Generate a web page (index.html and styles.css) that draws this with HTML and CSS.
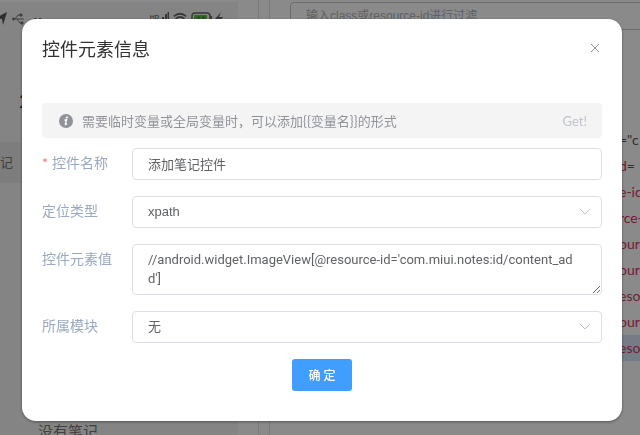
FILE: index.html
```html
<!DOCTYPE html>
<html lang="zh-CN">
<head>
<meta charset="utf-8">
<title>控件元素信息</title>
<link rel="stylesheet" href="styles.css">
</head>
<body>
<div class="page">
  <section class="left-card">
    <div class="phone">
      <div class="status">
        <svg width="8" height="14" viewBox="0 0 8 14"><path d="M7 0L-4 6l6 1 1 6z" fill="#555"/></svg>
        <svg class="usb" width="13" height="12" viewBox="0 0 13 12" fill="none" stroke="#777"><path d="M1 6h11M3 6l3-4h3M5 6l3 4h2"/><circle cx="1.500" cy="6" r="1" fill="#777"/><path d="M8 1h2v2H8zM9 9h2v2H9z" fill="#777"/></svg>
        <span class="dots">••</span>
        <span class="hd">HD</span>
        <svg width="10" height="14" viewBox="0 0 10 14" stroke="#666" stroke-width="2"><path d="M1 14V8M4 14V5M7 14V2M9.500 14V0"/></svg>
        <svg class="wifi" width="14" height="14" viewBox="0 0 16 14" fill="none" stroke="#666" stroke-width="2"><path d="M1 4q7-6 14 0M3 7q5-5 10 0M6 10q2-2 4 0"/></svg>
        <svg width="32" height="14" viewBox="0 0 32 14"><rect x="1" y="1" width="18" height="11" rx="3" fill="none" stroke="#666" stroke-width="1.500"/><rect x="3" y="3" width="13" height="8" fill="#6b4"/><path d="M7 5h2M7 5v5h2V7H7M11 5h2v5h-2M11 7h2" fill="none" stroke="#374"/><path d="M20 4v5" stroke="#666" stroke-width="2"/><path d="M30 0l-6 7h4l-2 6 6-8h-4z" fill="#666"/></svg>
      </div>
      <div class="phone-title">2</div>
      <div class="phone-tab">记</div>
      <div class="phone-empty">没有笔记</div>
    </div>
  </section>
  <section class="right-card">
    <input class="filter" type="text" aria-label="过滤" placeholder="输入class或resource-id进行过滤">
    <div class="tree">
      <div class="node dark">="c</div>
      <div class="node">d<span class="dark">=</span></div>
      <div class="node">e-id</div>
      <div class="node">rce-</div>
      <div class="node">ourc</div>
      <div class="node">ourc</div>
      <div class="node">esou</div>
      <div class="node">ourc</div>
      <div class="node current">esou</div>
    </div>
  </section>
</div>
<div class="overlay">
  <div class="dialog" role="dialog" aria-labelledby="dialog-title">
    <header class="dialog-header">
      <h1 class="dialog-title" id="dialog-title">控件元素信息</h1>
      <button class="close" type="button" aria-label="关闭"><svg width="10" height="10" viewBox="0 0 10 10" fill="none" stroke="#909399"><path d="M1 1l8 8M9 1l-8 8"/></svg></button>
    </header>
    <div class="alert">
      <svg width="14" height="14" viewBox="0 0 14 14"><circle cx="7" cy="7" r="7" fill="#909399"/><circle cx="7.800" cy="3.500" r="1.100" fill="#fff"/><path d="M5.500 6.200l2-.5-1.100 4.500q0 .7 1.500-.3" fill="none" stroke="#fff" stroke-width="1.400"/></svg>
      <span class="alert-text">需要临时变量或全局变量时，可以添加{{变量名}}的形式</span>
      <button class="get" type="button">Get!</button>
    </div>
    <form class="form">
      <label class="label required" for="name">控件名称</label>
      <input class="control" id="name" type="text" value="添加笔记控件">
      <label class="label" for="type">定位类型</label>
      <div class="select-box">
        <select class="control" id="type"><option>xpath</option></select>
        <svg class="chevron" width="12" height="8" viewBox="0 0 12 8" fill="none" stroke="#c0c4cc"><path d="M1 1l5 5 5-5"/></svg>
      </div>
      <label class="label" for="value">控件元素值</label>
      <textarea class="control area" id="value" rows="2" spellcheck="false">//android.widget.ImageView[@resource-id='com.miui.notes:id/content_add']</textarea>
      <label class="label" for="module">所属模块</label>
      <div class="select-box">
        <select class="control" id="module"><option>无</option></select>
        <svg class="chevron" width="12" height="8" viewBox="0 0 12 8" fill="none" stroke="#c0c4cc"><path d="M1 1l5 5 5-5"/></svg>
      </div>
      <button class="submit" type="button">确 定</button>
    </form>
  </div>
</div>
</body>
</html>
```
FILE: styles.css
```css
* { box-sizing: border-box; }
body {
  margin: 0;
  height: 100vh;
  overflow: hidden;
  background: #fff;
  font-family: Lato, "Noto Sans CJK SC", sans-serif;
  font-size: 13px;
}
button, input, select, textarea { font: inherit; }
svg { flex: none; }
.page { display: flex; gap: 10px; height: 100vh; }
.left-card { width: 259px; padding: 2px 20px 0 0; border-right: 1px solid #dcdfe6; }
.phone { height: 100%; background: #f4f4f4; color: #333; }
.status { display: flex; align-items: center; height: 34px; padding-right: 15px; }
.usb { margin-left: 4px; }
.dots { margin: 0 auto 0 8px; font-size: 8px; color: #666; }
.hd { margin-bottom: 6px; font-size: 6px; font-weight: 700; color: #666; }
.wifi { margin: 0 4px; }
.phone-title { height: 106px; padding: 52px 0 0 19px; font-size: 20px; line-height: 24px; }
.phone-tab { height: 41px; line-height: 41px; background: #e8e8e8; color: #777; }
.phone-empty { padding: 238px 0 0 38px; font-size: 15px; line-height: 20px; color: #777; }
.right-card { flex: 1; min-width: 0; padding: 2px 0 0 20px; border-left: 1px solid #dcdfe6; }
.filter {
  width: calc(100% + 10px);
  height: 28px;
  padding: 0 15px;
  border: 1px solid #c4c8d2;
  border-radius: 4px;
  background: none;
  font-family: "Liberation Sans", "Noto Sans CJK SC", sans-serif;
  font-size: 12px;
}
.filter::placeholder { color: #b0b3ba; }
.tree { padding-top: 97px; }
.node { padding-left: 329px; font-size: 14px; line-height: 26px; white-space: nowrap; color: #d63369; }
.dark { color: #555; }
.current { background: #d9e6f6; }
.overlay {
  position: fixed;
  inset: 0;
  padding: 19px 18px 14px 22px;
  background: rgba(0, 0, 0, .46);
}
.dialog {
  padding: 18px 20px 30px;
  border-radius: 14px;
  background: #fff;
  box-shadow: 0 1px 3px rgba(0, 0, 0, .4);
}
.dialog-header { display: flex; justify-content: space-between; align-items: flex-start; height: 66px; }
.dialog-title { margin: 0; font-size: 18px; font-weight: 400; line-height: 24px; color: #303133; }
.close { display: flex; padding: 6px 2px; border: 0; background: none; }
.alert {
  display: flex;
  align-items: center;
  height: 35px;
  padding: 0 15px 0 17px;
  border-radius: 4px;
  background: #f4f4f5;
  color: #909399;
}
.alert-text { flex: 1; margin-left: 9px; }
.get { padding: 0; border: 0; background: none; color: #c0c4cc; }
.form { display: grid; grid-template-columns: 90px 1fr; row-gap: 16px; margin-top: 10px; }
.label { font-size: 14px; line-height: 30px; color: #99a9bf; }
.required::before { content: "*"; margin-right: 4px; color: #f56c6c; }
.control {
  display: block;
  width: 100%;
  height: 32px;
  margin: 0;
  padding: 0 15px 2px;
  border: 1px solid #dcdfe6;
  border-radius: 4px;
  background: #fff;
  color: #606266;
  appearance: none;
  font-family: "Liberation Sans", "Noto Sans CJK SC", sans-serif;
}
.area {
  height: auto;
  padding: 5px 20px 6px 15px;
  font-family: Roboto, "Noto Sans CJK SC", sans-serif;
  line-height: 19px;
  word-break: break-all;
  resize: vertical;
}
.select-box { position: relative; }
.chevron { position: absolute; right: 11px; top: 12px; }
.submit {
  grid-column: 1 / -1;
  justify-self: center;
  width: 60px;
  height: 32px;
  padding: 0 0 2px;
  border: 0;
  border-radius: 3px;
  background: #409eff;
  color: #fff;
  font-size: 12px;
  font-weight: 500;
}
```
